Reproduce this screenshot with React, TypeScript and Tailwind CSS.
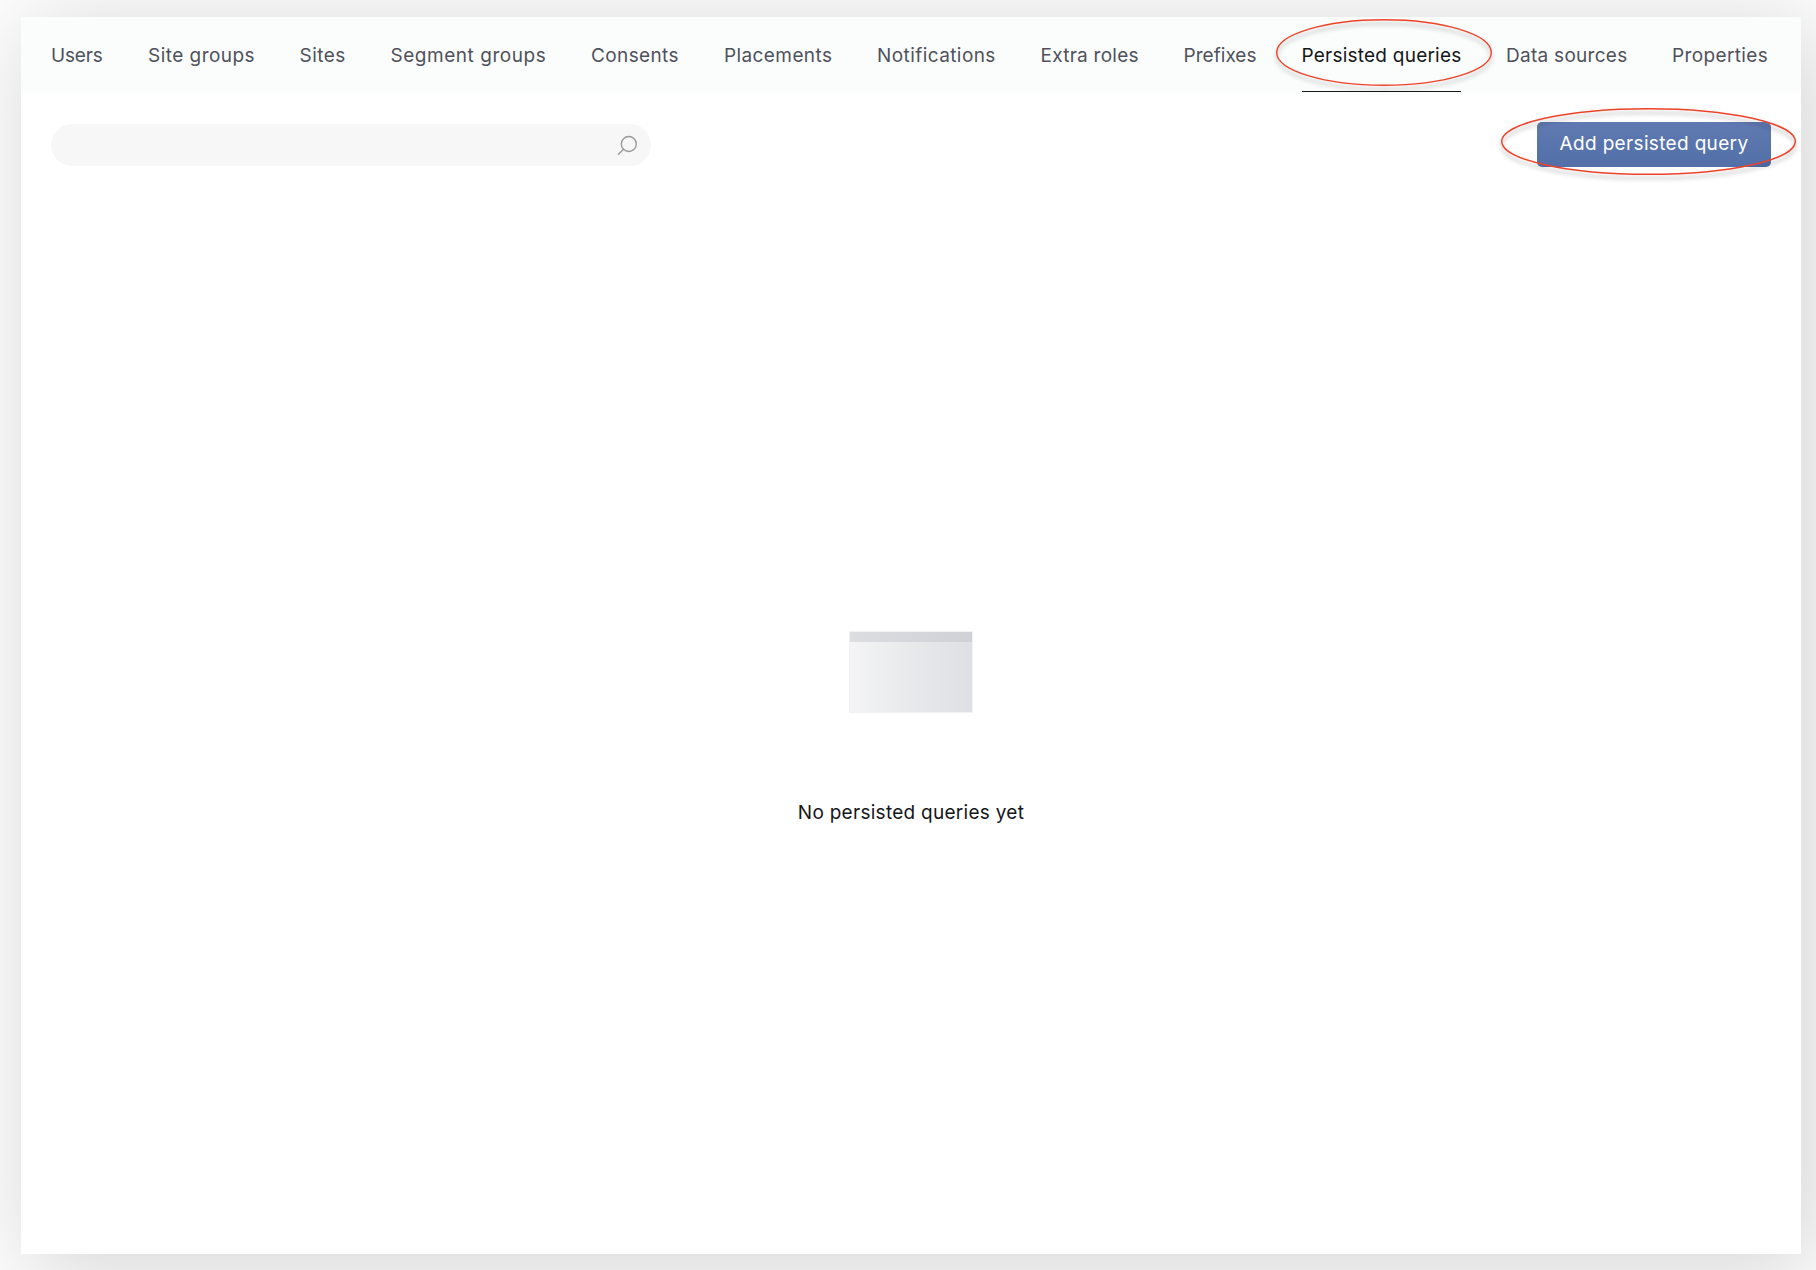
const tabs = [
  { label: "Users", box: "w-[52px] tracking-[-0.18px]" },
  { label: "Site groups", box: "w-[106.5px] tracking-[0.46px]" },
  { label: "Sites", box: "w-[46px] tracking-[0.46px]" },
  { label: "Segment groups", box: "w-[155.5px] tracking-[0.54px]" },
  { label: "Consents", box: "w-[88px] tracking-[0.38px]" },
  { label: "Placements", box: "w-[108px] tracking-[0.4px]" },
  { label: "Notifications", box: "w-[118.5px] tracking-[0.42px]" },
  { label: "Extra roles", box: "w-[98px] tracking-[0.26px]" },
  { label: "Prefixes", box: "w-[73px] tracking-[0.04px]" },
  { label: "Persisted queries", box: "w-[159.5px] tracking-[0.23px]", active: true },
  { label: "Data sources", box: "w-[121px] tracking-[0.28px]" },
  { label: "Properties", box: "w-[97px] tracking-[0.36px]" },
];

function Ring({ w, h, className }: { w: number; h: number; className: string }) {
  return (
    <svg
      className={"pointer-events-none absolute overflow-visible drop-shadow-[0_4px_2px_rgba(0,0,0,0.3)] " + className}
      width={w}
      height={h}
      viewBox={`0 0 ${w} ${h}`}
      fill="none"
    >
      <ellipse cx={w / 2} cy={h / 2} rx={w / 2 - 0.7} ry={h / 2 - 0.7} stroke="#ee4229" strokeWidth="1.4" />
    </svg>
  );
}

export default function App() {
  return (
    <div className="h-[1270px] w-[1816px] overflow-hidden bg-[#fcfcfc] pl-[21px] pt-[17px] font-['Inter',sans-serif] text-[19px]">
      <div className="flex h-[1237px] w-[1780px] flex-col bg-white shadow-[10px_12px_80px_rgba(0,0,0,0.16)]">
        <nav className="flex h-[75px] gap-[45px] bg-[#fbfdfc] pl-[30px] text-[#4f515b]">
          {tabs.map((t) => (
            <div
              key={t.label}
              className={
                "relative flex h-full shrink-0 items-center whitespace-nowrap border-b pt-[4px] " +
                t.box +
                (t.active ? " border-[#15161a] text-[#15161a]" : " border-transparent")
              }
            >
              <span>{t.label}</span>
              {t.active && <Ring w={216} h={67} className="-left-[26px] top-[2px]" />}
            </div>
          ))}
        </nav>
        <div className="flex items-start justify-between pl-[30px] pr-[30px] pt-[30px]">
          <div className="mt-[2px] flex h-[42px] w-[600px] items-center justify-end rounded-full bg-[#f7f7f7] pr-[13px]">
            <svg width="21" height="21" viewBox="0 0 21 21" fill="none" stroke="#98999c" strokeWidth="1.4">
              <circle cx="11.8" cy="9" r="7.5" />
              <path d="M6.5 14.3 L1 19.8" />
            </svg>
          </div>
          <button className="relative flex h-[45px] w-[234px] items-center justify-center rounded-[5px] bg-linear-to-b from-[#607ab1] to-[#526fa8] tracking-[0.34px] text-white">
            <span className="whitespace-nowrap">Add persisted query</span>
            <Ring w={295} h={67} className="-left-[36px] -top-[14px]" />
          </button>
        </div>
        <div className="mt-[464px] flex flex-col items-center">
          <div className="h-[82px] w-[124px] border border-[#f1f1f3] bg-linear-to-r from-[#f4f4f6] via-[#e8e9eb] to-[#dfe0e5]">
            <div className="h-[10px] bg-linear-to-r from-[#dcdde1] to-[#d0d1d7]" />
          </div>
          <p className="mt-[86px] whitespace-nowrap tracking-[0.28px] text-[#15161a]">
            <span>No persisted queries yet</span>
          </p>
        </div>
      </div>
    </div>
  );
}
